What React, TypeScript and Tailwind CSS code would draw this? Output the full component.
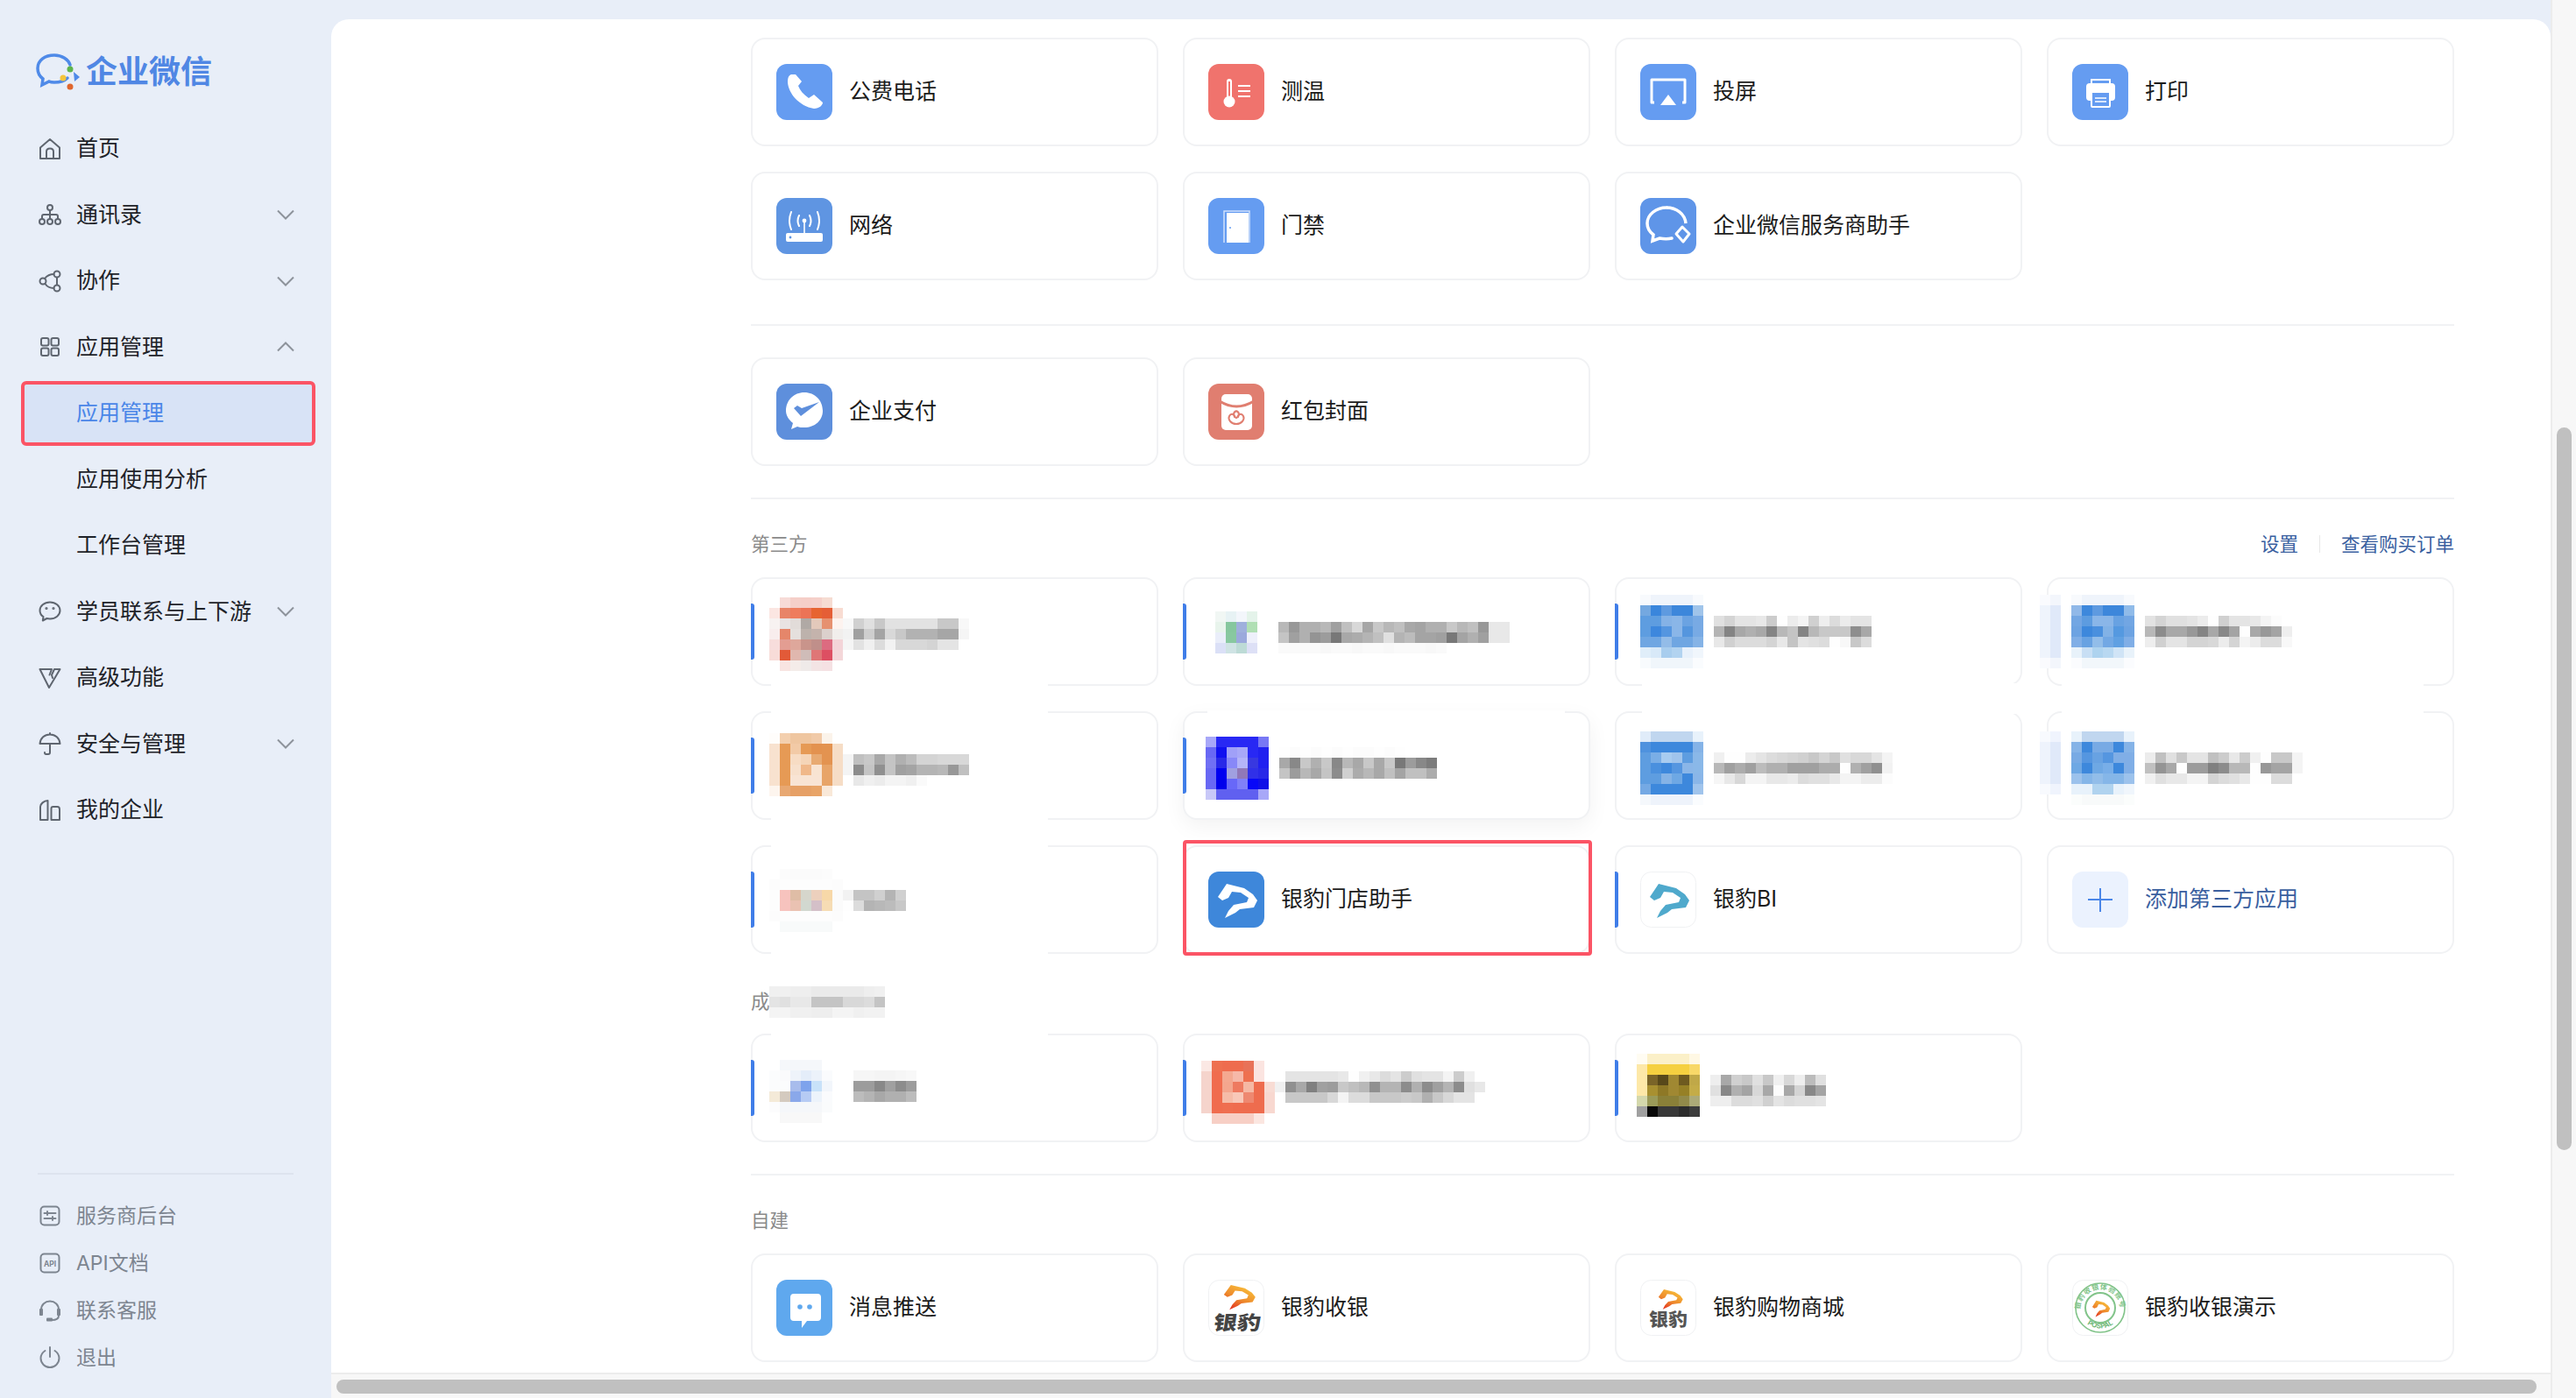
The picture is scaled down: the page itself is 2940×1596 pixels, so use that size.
import type { ReactNode } from 'react'

const CELL = 12
const LEOPARD = 'M11 29 L21 14 L41 19 L51 26 L56 33 L52 41 L36 43 L31 47 L19 53 L23 45 L29 38 L44 35 L46 30 L37 24 L27 23 L23 30 L16 33 Z'

// a privacy-blurred block: each row is a list of hex colours, two digits mean a grey, "-" is empty
function Mosaic({ rows }: { rows: string[] }) {
  const cells = rows.map((r) => r.split(' '))
  const cols = Math.max(...cells.map((r) => r.length))
  return (
    <svg width={cols * CELL} height={rows.length * CELL} shapeRendering="crispEdges">
      {cells.map((row, y) =>
        row.map((c, x) =>
          c === '-' ? null : (
            <rect key={x} x={x * CELL} y={y * CELL} width={CELL} height={CELL} fill={c.length === 2 ? `#${c}${c}${c}` : `#${c}`} />
          ),
        ),
      )}
    </svg>
  )
}

function Tile({ bg, children }: { bg: string; children: ReactNode }) {
  return (
    <svg width="64" height="64" viewBox="0 0 64 64" className="shrink-0">
      <rect x="0" y="0" width="64" height="64" rx="12" fill={bg} />
      {children}
    </svg>
  )
}

function LogoTile({ children }: { children: ReactNode }) {
  return (
    <svg width="64" height="64" viewBox="0 0 64 64" className="shrink-0">
      <rect x="0.5" y="0.5" width="63" height="63" rx="12" fill="#fff" stroke="#f0f1f3" />
      {children}
    </svg>
  )
}

const PhoneIcon = (
  <Tile bg="#659cf1">
    <path d="M17 12 C14 13 13 16 13 21 C14 34 26 48 43 51 C49 51 53 47 53 44 L43 35 L37 39 C31 35 27 30 25 25 L29 20 L22 12 Z" fill="#fff" />
  </Tile>
)
const TempIcon = (
  <Tile bg="#f0736d">
    <rect x="21" y="17" width="6" height="26" rx="3" fill="#fff" />
    <rect x="23" y="20" width="2" height="18" fill="#f0736d" />
    <circle cx="24" cy="43" r="6.5" fill="#fff" />
    <path d="M34 25 H48 M34 31 H48 M34 37 H48" stroke="#fff" strokeWidth="2" />
  </Tile>
)
const CastIcon = (
  <Tile bg="#659cf1">
    <path d="M16 44 H13 V18 H51 V44 H48" fill="none" stroke="#fff" strokeWidth="3" strokeLinejoin="round" />
    <path d="M32 35 L41 47 H23 Z" fill="#fff" />
  </Tile>
)
const PrintIcon = (
  <Tile bg="#659cf1">
    <path d="M22 22 V18 H43 V22" fill="none" stroke="#fff" strokeWidth="2" />
    <rect x="16" y="22" width="33" height="20" rx="4" fill="#fff" />
    <rect x="22" y="32" width="21" height="17" rx="1" fill="#659cf1" stroke="#fff" strokeWidth="2" />
    <path d="M26 39 H39 M26 43 H39" stroke="#fff" strokeWidth="1.6" />
  </Tile>
)
const NetIcon = (
  <Tile bg="#5f95e2">
    <rect x="11" y="40" width="42" height="10" rx="2" fill="#fff" />
    <circle cx="16" cy="45" r="1.4" fill="#5f95e2" />
    <path d="M32 27 V40" stroke="#fff" strokeWidth="1.6" />
    <circle cx="32" cy="26" r="2.4" fill="#fff" />
    <path d="M26 20 Q23 26 26 32 M38 20 Q41 26 38 32 M17 16 Q13 26 17 36 M47 16 Q51 26 47 36" fill="none" stroke="#fff" strokeWidth="2" strokeLinecap="round" />
  </Tile>
)
const DoorIcon = (
  <Tile bg="#659cf1">
    <path d="M18 51 V15 H47 V51" fill="none" stroke="#cfe0fb" strokeWidth="1.5" />
    <rect x="21" y="17" width="25" height="34" fill="#fff" />
    <circle cx="25" cy="34" r="1" fill="#659cf1" />
  </Tile>
)
const WecomIcon = (
  <Tile bg="#5f95e8">
    <path d="M30 11 C18 11 8 19 8 29 C8 34 11 39 15 42 L14 49 L22 46 C27 47 32 47 36 46" fill="none" stroke="#fff" strokeWidth="3.5" strokeLinecap="round" />
    <path d="M52 29 C51 18 41 11 30 11" fill="none" stroke="#fff" strokeWidth="3.5" />
    <path d="M48 33 L56 41 L49 50 L41 41 Z" fill="none" stroke="#fff" strokeWidth="3" strokeLinejoin="round" />
  </Tile>
)
const PayIcon = (
  <Tile bg="#5e8fdc">
    <path d="M32 10 C44 10 53 19 53 31 C53 42 44 50 32 50 C29 50 26 50 24 49 L17 52 L19 45 C14 41 11 36 11 31 C11 19 20 10 32 10 Z" fill="#fff" />
    <path d="M20 28 L28 37 L49 21 L29 28 L24 25 Z" fill="#5e8fdc" />
  </Tile>
)
const RedIcon = (
  <Tile bg="#e07e70">
    <rect x="15" y="12" width="35" height="41" rx="5" fill="#fff" />
    <path d="M13 20 Q32 32 52 20" fill="none" stroke="#e07e70" strokeWidth="3" />
    <path d="M32 46 C26 46 22 41 24 37 C26 33 31 35 30 39 M32 46 C38 46 42 41 40 37 C38 33 33 35 34 39 M32 31 C28 33 28 37 32 39 C36 37 36 33 32 31" fill="none" stroke="#e07e70" strokeWidth="2" />
  </Tile>
)
const MsgIcon = (
  <Tile bg="#5fa8ee">
    <path d="M20 16 H47 Q51 16 51 20 V43 Q51 47 47 47 H35 L29 55 L29 47 H20 Q16 47 16 43 V20 Q16 16 20 16 Z" fill="#fff" />
    <circle cx="27" cy="31" r="2.8" fill="#5fa8ee" />
    <circle cx="38" cy="31" r="2.8" fill="#5fa8ee" />
  </Tile>
)
const LeopardBlue = (
  <Tile bg="#3e87da">
    <path d={LEOPARD} fill="#fff" />
  </Tile>
)
const LeopardTeal = (
  <LogoTile>
    <path d={LEOPARD} fill="#4fa9cc" />
  </LogoTile>
)
const AddIcon = (
  <Tile bg="#ebf2fe">
    <path d="M32 19 V46 M18 32 H46" stroke="#4a86e8" strokeWidth="2" />
  </Tile>
)

function Fire() {
  return (
    <defs>
      <linearGradient id="fire" x1="0.8" y1="0" x2="0.2" y2="1">
        <stop offset="0" stopColor="#f9c63c" />
        <stop offset="0.55" stopColor="#ee8a2c" />
        <stop offset="1" stopColor="#e22d20" />
      </linearGradient>
    </defs>
  )
}

const CashierIcon = (
  <LogoTile>
    <Fire />
    <path d={LEOPARD} fill="url(#fire)" transform="translate(9 -4) scale(0.8 0.72)" />
    <text x="32" y="57" textAnchor="middle" fontSize="22" fontWeight="900" fill="#444" textLength="54" lengthAdjust="spacingAndGlyphs" transform="skewX(-8) translate(8 0)">银豹</text>
  </LogoTile>
)
const ShopIcon = (
  <LogoTile>
    <path d={LEOPARD} fill="url(#fire)" transform="translate(14 3) scale(0.62 0.58)" />
    <text x="32" y="53" textAnchor="middle" fontSize="20" fontWeight="900" fill="#555" textLength="44" lengthAdjust="spacingAndGlyphs">银豹</text>
  </LogoTile>
)
const DemoIcon = (
  <LogoTile>
    <circle cx="32" cy="32" r="28" fill="none" stroke="#82c48a" strokeWidth="1.6" />
    <circle cx="32" cy="32" r="17" fill="none" stroke="#82c48a" strokeWidth="2" />
    <path id="ring-top" d="M9 34 A23 23 0 0 1 55 34" fill="none" />
    <path id="ring-bot" d="M11 44 A25 25 0 0 0 53 44" fill="none" />
    <text fontSize="8" fill="#82c48a" fontWeight="700">
      <textPath href="#ring-top" textLength="70">银豹收银体验账号</textPath>
    </text>
    <text fontSize="8" fill="#6fb878" fontWeight="700">
      <textPath href="#ring-bot" startOffset="9">POSPAL</textPath>
    </text>
    <path d={LEOPARD} fill="url(#fire)" transform="translate(18 17) scale(0.45 0.48)" />
  </LogoTile>
)

type Blur = { left: number; top: number; rows: string[] }
type App = {
  name?: string
  icon?: ReactNode
  bar?: boolean
  blur?: Blur
  link?: boolean
  selected?: boolean
  hover?: boolean
  hideTop?: [number, number]
  hideBottom?: [number, number]
}

function AppCard({ app }: { app: App }) {
  return (
    <div className={`relative flex h-[124px] items-center gap-[19px] rounded-[16px] border-2 border-[#f1f2f4] bg-white pl-[27px] ${app.hover ? 'shadow-[0_8px_24px_rgba(0,0,0,0.05)]' : ''}`}>
      {app.icon}
      {app.name && <span className={`text-[25px] ${app.link ? 'text-[#3a5f9f]' : 'text-[#1c1c1c]'}`}>{app.name}</span>}
      {app.bar && <span className="absolute left-[-2px] top-[28px] h-[64px] w-[4px] rounded-r-[3px] bg-[#3f7de8]" />}
      {app.hideTop && <span className="absolute top-[-3px] h-[4px] bg-white" style={{ left: app.hideTop[0], width: app.hideTop[1] }} />}
      {app.hideBottom && <span className="absolute bottom-[-3px] h-[4px] bg-white" style={{ left: app.hideBottom[0], width: app.hideBottom[1] }} />}
      {app.blur && (
        <div className="absolute flex" style={{ left: app.blur.left - 2, top: app.blur.top - 2 }}>
          <Mosaic rows={app.blur.rows} />
        </div>
      )}
      {app.selected && <span className="absolute -bottom-[4px] -left-[2px] -right-[4px] -top-[8px] rounded-[4px] border-4 border-[#fb5465]" />}
    </div>
  )
}

function Grid({ apps }: { apps: App[] }) {
  return (
    <div className="grid w-[1944px] grid-cols-[repeat(4,465px)] gap-x-[28px] gap-y-[29px]">
      {apps.map((a, i) => (
        <AppCard key={i} app={a} />
      ))}
    </div>
  )
}

const Hr = ({ className }: { className: string }) => <div className={`h-[2px] w-[1944px] bg-[#f1f2f4] ${className}`} />

const thirdParty: App[] = [
  {
    bar: true,
    hideBottom: [21, 316],
    blur: {
      left: 21,
      top: 23,
      rows: [
        '- f7dbd7 f5cfc9 f5cec8 f5d0ca f6dcd2',
        'fbe6e2 e88468 ee7c5d ec7356 e76431 e55e36 f8dcd2',
        'f7f2f1 e9e3e2 e2dcd9 b0a9a5 e3c9bb e69170 fdf3ef f8 d0 e0 c8 e2 e2 e2 e2 e2 c8 c8 f8',
        'f8eded e5866a e5e0dd bdb2ac c4b3ac dbd0cc f1eeec f2 a0 ce a4 d8 c8 b2 b2 b2 a6 a6 f5',
        'f7dddc e39d92 dea79b c9948b c08f8a dc6b80 f3d4d8 f5 e2 f0 dc f2 d8 d8 d8 d4 e4 e4',
        'f8dcd8 e25a38 e0b7ae cfbcb8 df7676 dd4f62 f4d7d9',
        '- f8e4e1 f4ece9 efeae9 f3e4e4 f5e1e3',
      ],
    },
  },
  {
    bar: true,
    blur: {
      left: 37,
      top: 39,
      rows: [
        'f1f7f4 e7f2f4 f3f6fb e4f3ea',
        'e8f4ec 86c79e 9fb0dc b0dfb4 - - b8 98 b0 b0 b8 a0 c0 d8 a6 c8 b8 c0 a8 a4 b0 b0 c8 b8 c0 98 e8 e8',
        'eaeefa 88c8a0 9ba9dc eef0fb - - c4 a0 b0 94 9c 78 a8 ac b4 c0 e0 b4 bc a4 a4 a0 78 a4 b0 a0 e8 e8',
        'dbe0f7 cfe3e4 bddbd6 dde0f6 - - fa fa fa fa f8 fa fa f8 fa fa f8 fa fa fa f8 fa',
      ],
    },
  },
  {
    bar: true,
    hideBottom: [29, 434],
    blur: {
      left: 29,
      top: 20,
      rows: [
        'f8fafd eff4fb eff4fb eff4fb eff4fb f8fafd',
        '74a8e0 3a86dc 5e9ae0 3d87db 3c87db a0c4ea',
        '5e9de0 5e9de0 85b2e6 8ab6e8 6ba3e2 78aae4 - e0 d4 e4 e4 e8 cc fe ec f4 d0 ee dc ec e4 e4',
        '5e9de0 3d87dd 5596e0 8ab6e8 5596de 78aae4 - b4 84 a8 b0 a8 84 b8 c4 84 b8 c8 c8 c8 8e a8',
        '6fa6e2 6fa6e2 93bce8 6fa6e2 6fa6e2 85b3e6 - e8 d0 dc dc dc d4 e8 c4 e4 e0 dc fe f8 c8 dc',
        'e0eef9 d8e9f8 a8cdee b2d3f0 e8f1fb f0f6fc',
        'f8fbfd f0f6fb f0f6fb f0f6fb f0f6fb fafcfe',
      ],
    },
  },
  {
    hideBottom: [15, 413],
    blur: {
      left: -8,
      top: 20,
      rows: [
        'fafbfe f3f6fc - f8fafd eff4fb eff4fb eff4fb eff4fb f8fafd',
        'eff4fc e0e9f9 - 90b8e8 3d88dc 5e9ae0 3d87db 3d87db 90bbe9',
        'eff4fc e0e9f9 - 72a6e3 5d9ce0 8ab6e8 8ab6e8 68a2e2 72a6e3 - e2 d4 e0 e0 e4 ec fe d0 e4 e4 e8 f4 fc',
        'eff4fc e0e9f9 - 6da3e2 3d88dc 4a90de 82b2e6 5599e0 6da3e2 - b8 8c a8 a8 98 84 a8 88 a4 fe a8 98 a4 ee',
        'eff4fc e0e9f9 - 80aee6 68a2e2 92bde9 72a8e4 60a0e2 80aee6 - ee d0 e4 e4 d4 d4 d8 ec d4 f4 ec dc dc f8',
        'eff4fc e0e9f9 - e8f2fa c8dff4 aed3ef b8d8f1 d0e4f6 e8f2fa',
        'fafbfe f3f6fc - fbfcfe f2f7fb f2f7fb f2f7fb f2f7fb fbfcfe',
      ],
    },
  },
  {
    bar: true,
    hideTop: [21, 316],
    hideBottom: [21, 316],
    blur: {
      left: 21,
      top: 25,
      rows: [
        'fffdfb f3cfae efc6a0 efc6a0 f1caa8 fbf3ea',
        'f8e2cf e69a55 f2caa6 e69a55 e3924f e39350 f6ddc6',
        'f8e2cf e69a55 f7dcc4 f5d5b8 e8aa72 e39350 f6ddc6 f4 c0 c8 a8 c4 b0 bc d4 d4 d8 d8 d8',
        'f8e2cf e69a55 f7e0cc f0b88a f8e4d2 e8a468 f6ddc6 f4 8c c4 90 c4 a0 a4 b4 b4 b8 98 c0',
        'f8e2cf e69a55 f8e4d4 f8e4d4 f8e4d4 e8a468 f6ddc6 - e8 f0 ec f4 f4 f0 fa',
        'fdf5ee e8a872 e6a066 e6a066 e8a468 f9e8d8',
      ],
    },
  },
  {
    bar: true,
    hover: true,
    hideTop: [26, 408],
    blur: {
      left: 26,
      top: 29,
      rows: [
        'a8a8f8 2828f4 2828f4 2828f4 2828f4 7878f4',
        '6868f4 1010f0 a0a0f8 a8a8f8 2828f4 2020f0 - fe fc fe fc fe fc fe fc fc fe fc fe',
        '7070f4 2828e8 8888f8 b4b4f8 3838e0 2020f0 - a8 88 c8 b0 c8 88 b8 a8 c8 a8 c8 78 9c 88 7c',
        '6868f4 0000f0 a0a0e0 9078b8 3030e8 2828e8 - c4 9c b8 a8 c4 8c d0 ac b8 a8 c0 a4 c0 c0 ac',
        '6868f4 0000ec 6868f8 8080f8 0808f8 1010e8',
        'c8c8f8 6060f0 6060f0 6060f0 6060f0 a8a8f8',
      ],
    },
  },
  {
    hideTop: [29, 434],
    blur: {
      left: 29,
      top: 23,
      rows: [
        'e0ecf9 c0d6ef c0d6ef c0d6ef c0d6ef e8f2fb',
        '4f92de 3d88dc 3d88dc 3d88dc 3d88dc 85b3e7',
        '5e9de0 7aaee6 a8ccf0 a0c4ec 5e9de0 8ab8e8 - f0 fe fe ec e4 dc d8 d4 d0 c8 d4 c8 e0 d8 d8 e4 f4',
        '5e9de0 4a90de 3d88dc 5596e0 8ab6e8 8ab8e8 - b8 a0 ac a0 bc b0 b0 a0 a0 a0 ac ac fe b0 a0 90 f2',
        '5e9de0 5e9de0 85b3e6 6ea8e4 3d88dc 8ab6e8 - f6 e8 d8 f4 f4 e8 e8 ec dc e0 e0 e8 f4 f4 ec ec fc',
        '75a9e4 3d88dc 3d88dc 3d88dc 3d88dc a0c4ec',
        'f5f8fc eef3fb eef3fb eef3fb eef3fb fafcfe',
      ],
    },
  },
  {
    hideTop: [15, 413],
    blur: {
      left: -8,
      top: 23,
      rows: [
        'f8fafe f0f4fd - e8f2fb c0d6ef c0d6ef c0d6ef c0d6ef e8f2fb',
        'eef3fc e0e9f9 - 85b3e7 3d88dc 78aae4 78aae4 3d88dc 85b3e7',
        'eef3fc e0e9f9 - 78aae4 5596e0 68a2e2 5596e0 80aee6 80aee6 - ec c0 e0 c8 e4 e4 c0 cc e8 cc f0 fe c8 c8 f4',
        'eef3fc e0e9f9 - 6ea8e4 3d88dc 6ea8e4 78aee8 3d88dc 80aee6 - c0 94 a8 fe 9c 9c 80 8c b8 b8 fe 98 a4 a4 f4',
        'eef3fc e0e9f9 - 9cc2ec 85b6e8 92bde9 85b6e8 85b6e8 9cc2ec - f0 e0 e8 e8 f4 f4 d4 dc e0 e8 fe fe dc dc',
        'f8fafe f0f4fd - e8f2fb e8f2fb b0d3ef b0d3ef e8f2fb f0f6fc',
        '- - - fbfdfc f8fafa f8fafa f8fafa f8fafa fbfdfc',
      ],
    },
  },
  {
    bar: true,
    hideTop: [21, 316],
    hideBottom: [21, 316],
    blur: {
      left: 21,
      top: 27,
      rows: [
        '- fcfcfc fbfbfb fbfbfb fbfbfb fcfcfc',
        'fcfcfc fdfdfd fdfdfd fdfdfd fdfdfd fdfdfd fcfcfc',
        'fdfdfd f7c3be dfbda6 d6d6cc ecd0bd f7d8a8 fbfbfb f2 c4 c4 d0 b4 d0',
        'fdfdfd f7c3be eac2b2 d2d8d0 d4c0c8 f6dcb4 fbfbfb fe dc b4 b8 bc c8',
        'fcfcfc fdfdfd fdfdfd fdfdfd fdfdfd fdfdfd fcfcfc',
        '- f8fafa f8fafa f8fafa f8fafa f8fafa',
      ],
    },
  },
  { name: '银豹门店助手', icon: LeopardBlue, selected: true },
  { name: '银豹BI', icon: LeopardTeal, bar: true },
  { name: '添加第三方应用', icon: AddIcon, link: true },
]

const contractors: App[] = [
  {
    bar: true,
    hideTop: [21, 316],
    blur: {
      left: 21,
      top: 30,
      rows: [
        '- f5f7fa f5f7fa f5f7fa f5f7fa',
        'fbfcfd fafafc eef3fa e4edf9 ecf2fa fafbfd - - f6 f6 f4 f4 f6 f8',
        'fbfcfd fbfcfd a8bcec 7ea3ec c8e2f9 f2f6fb - - 9c 9c 88 a0 8c 9c',
        'f4ead8 d4cabf 8aa8ea b6cbf4 ecf3fb fafbfd - - bc b4 a8 b0 b0 bc',
        'fcfcfd f5f7fa f5f7fa f5f7fa f5f7fa fafbfc',
        '- f8f8f8 f8f8f8 f8f8f8 f8f8f8',
      ],
    },
  },
  {
    bar: true,
    blur: {
      left: 21,
      top: 31,
      rows: [
        'fbe8e4 ee7050 ee6c4e ee6c4e e87258 fbe4e0',
        'f5d4cc f06c4e f4a890 f6b8a8 ee7050 fbe4e0 - - e4 e4 e4 e4 e4 e8 fe f0 e8 dc e4 cc e0 e4 e4 f4 cc f0',
        'f5d4cc f06c4e f4a68e ee7a60 f5b8a4 ee6c4e f8dcd4 f0 90 a8 80 a0 9c c8 c0 b8 90 b4 b4 8c b0 8c a0 b4 8c e0 e8',
        'f5d4cc f06c4e f6bca8 f8c8b8 ee8870 ee6c4e f8d8d0 - c8 c8 c8 c8 d8 f4 dc dc c8 c8 c8 cc c8 b0 c8 d8 e4 e4',
        'f5d4cc f06c4e ef6e50 ef6c4e ee6c4e ee6c4e f8d8d0',
        '- f7cfc5 f7cfc5 f7cfc5 f7cfc5 fbe6e0',
      ],
    },
  },
  {
    bar: true,
    blur: {
      left: 25,
      top: 23,
      rows: [
        'fffcf2 fbf0c8 fbf0c8 fbf0c8 fbf0c8 fff8e4',
        'fde8a8 f5d040 f5d040 f5d040 f5d040 f8d868',
        'fde8a8 7a6428 58481a a08832 6e5a20 c0a848 - ee a8 d0 c8 e0 c8 f0 d8 ee bc e0',
        'fde8a8 a89030 8e7826 a08832 968026 c4ac48 - e0 88 b0 a4 d8 a8 fc a8 d4 88 a4',
        'd4d8ac 9a9a58 8a8038 8a8038 928a4a acaa78 - ee ee dc dc e0 d0 e4 dc e0 e0 e4',
        'a0a0a0 080808 383838 383838 2c2c2c 3c3c3c',
      ],
    },
  },
]

const SW = { fill: 'none', stroke: '#5f6670', strokeWidth: 2, strokeLinecap: 'round', strokeLinejoin: 'round' } as const
const SG = { ...SW, stroke: '#7d8590' }

function NavIcon({ children }: { children: ReactNode }) {
  return (
    <svg width="26" height="26" viewBox="0 0 26 26" className="shrink-0">
      {children}
    </svg>
  )
}

const Icons = {
  home: <path {...SW} d="M2 11.5 L13 2 L24 11.5 V24 H2 Z M9 24 V16 Q9 12.5 13 12.5 Q17 12.5 17 16 V24" />,
  org: (
    <g {...SW}>
      <circle cx="13" cy="5" r="3" />
      <circle cx="4" cy="21" r="3" />
      <circle cx="13" cy="21" r="3" />
      <circle cx="22" cy="21" r="3" />
      <path d="M4 18 V15 Q4 13 6 13 H20 Q22 13 22 15 V18 M13 8 V18" />
    </g>
  ),
  collab: (
    <g {...SW}>
      <circle cx="5" cy="13" r="3.5" />
      <circle cx="21" cy="5" r="3.5" />
      <circle cx="21" cy="21" r="3.5" />
      <path d="M7 10 Q11 5 17.5 5 M7.5 16 Q11 21 17.5 21 M21 9 V17" />
    </g>
  ),
  grid: (
    <g {...SW}>
      <rect x="3" y="3" width="8.5" height="8.5" rx="2" />
      <rect x="14.5" y="3" width="8.5" height="8.5" rx="2" />
      <rect x="3" y="14.5" width="8.5" height="8.5" rx="2" />
      <rect x="14.5" y="14.5" width="8.5" height="8.5" rx="2" />
    </g>
  ),
  chat: (
    <g {...SW}>
      <path d="M13 2.5 C6.5 2.5 1.5 6.7 1.5 12 C1.5 15 3 17.5 5.5 19.2 L4.8 23.5 L9.5 21 C10.6 21.3 11.8 21.4 13 21.4 C19.5 21.4 24.5 17.2 24.5 12 C24.5 6.7 19.5 2.5 13 2.5 Z" />
      <circle cx="9" cy="9.5" r="0.6" fill="#5f6670" />
      <circle cx="17" cy="9.5" r="0.6" fill="#5f6670" />
    </g>
  ),
  vip: <path {...SW} d="M1.5 3 H15 L12.5 9.5 M1.5 3 L12 24 L24.5 3 H18 L15 9.5 L16 13" />,
  umbrella: <path {...SW} d="M1.5 13 C2 6.5 7 2.5 13 2.5 C19 2.5 24 6.5 24.5 13 Z M13 1 V2.5 M13 13 V23 Q13 25 11 25 H8.5 Q7 25 7 23" />,
  corp: <path {...SW} d="M2 24 V9 C2 6 6 2 10.5 2 V24 Z M14.5 24 V11 Q14.5 9 16.5 9 H21.5 Q24 9 24 12 V24 Z" />,
  svc: (
    <g {...SG}>
      <rect x="2.5" y="2.5" width="21" height="21" rx="4" />
      <path d="M6.5 10 H19.5 M6.5 16 H19.5 M10 8 V12 M16 14 V18" />
    </g>
  ),
  api: (
    <g>
      <rect x="2.5" y="2.5" width="21" height="21" rx="4" {...SG} />
      <text x="13" y="17" textAnchor="middle" fontSize="8.5" fontWeight="700" fill="#7d8590">API</text>
    </g>
  ),
  headset: (
    <g {...SG}>
      <path d="M3 14 V12 C3 6.5 7.5 2.5 13 2.5 C18.5 2.5 23 6.5 23 12 V14 M23 19 C23 22 20 24 15 24" />
      <rect x="2" y="12" width="2" height="6" fill="#7d8590" />
      <rect x="22" y="12" width="2" height="6" fill="#7d8590" />
      <rect x="10" y="22.5" width="5" height="2" fill="#7d8590" />
    </g>
  ),
  power: <path {...SG} d="M7.5 5 C4.5 7 2.5 10 2.5 13.5 C2.5 19.3 7.2 24 13 24 C18.8 24 23.5 19.3 23.5 13.5 C23.5 10 21.5 7 18.5 5 M13 1 V12" />,
}

const nav: { label: string; icon?: ReactNode; chevron?: 'up' | 'down'; sub?: boolean; active?: boolean }[] = [
  { label: '首页', icon: Icons.home },
  { label: '通讯录', icon: Icons.org, chevron: 'down' },
  { label: '协作', icon: Icons.collab, chevron: 'down' },
  { label: '应用管理', icon: Icons.grid, chevron: 'up' },
  { label: '应用管理', sub: true, active: true },
  { label: '应用使用分析', sub: true },
  { label: '工作台管理', sub: true },
  { label: '学员联系与上下游', icon: Icons.chat, chevron: 'down' },
  { label: '高级功能', icon: Icons.vip },
  { label: '安全与管理', icon: Icons.umbrella, chevron: 'down' },
  { label: '我的企业', icon: Icons.corp },
]

const footerNav = [
  { label: '服务商后台', icon: Icons.svc },
  { label: 'API文档', icon: Icons.api },
  { label: '联系客服', icon: Icons.headset },
  { label: '退出', icon: Icons.power },
]

function Chevron({ dir }: { dir: 'up' | 'down' }) {
  return (
    <svg width="20" height="12" viewBox="0 0 20 12" className="absolute left-[316px]">
      <path d={dir === 'down' ? 'M1 1.5 L10 10.5 L19 1.5' : 'M1 10.5 L10 1.5 L19 10.5'} fill="none" stroke="#8d939b" strokeWidth="2" />
    </svg>
  )
}

function Sidebar() {
  return (
    <aside className="flex w-[378px] shrink-0 flex-col">
      <div className="flex h-[132px] items-start gap-[6px] pl-[41px] pt-[60px]">
        <svg width="51" height="44" viewBox="0 0 51 44" className="shrink-0">
          <path d="M36 29 C32 33 27 34 21 34 C19 34 17 34 15 33 L7 37 L8 30 C4 27 2 23 2 18 C2 9 10 3 21 3 C30 3 37 8 39 14" fill="none" stroke="#4f8ae8" strokeWidth="3.5" strokeLinecap="round" />
          <circle cx="39" cy="19" r="3.5" fill="#5db44c" />
          <circle cx="31" cy="29" r="3.5" fill="#f4c53c" />
          <circle cx="39" cy="39" r="3.5" fill="#e0672e" />
          <path d="M43 22 L50 28 L44 33" fill="#4f8ae8" />
        </svg>
        <span className="mt-[-2px] text-[36px] font-bold leading-[48px] text-[#5087e4]">企业微信</span>
      </div>
      <nav className="flex flex-col">
        {nav.map((item, i) => (
          <div key={i} className="relative flex h-[75.5px] items-center">
            {item.active && <span className="absolute bottom-[1px] left-[24px] right-[18px] top-[1px] rounded-[6px] border-4 border-[#fb5465] bg-[#d8e3f6]" />}
            {item.icon ? <span className="ml-[44px] flex w-[43px]"><NavIcon>{item.icon}</NavIcon></span> : <span className="w-[87px]" />}
            <span className={`relative text-[25px] ${item.active ? 'text-[#4a86e8]' : 'text-[#1f2329]'}`}>{item.label}</span>
            {item.chevron && <Chevron dir={item.chevron} />}
          </div>
        ))}
      </nav>
      <div className="mt-auto flex flex-col pb-[19px]">
        <div className="mx-[43px] mb-[20px] h-[2px] bg-[#dde3ee]" />
        {footerNav.map((item) => (
          <div key={item.label} className="flex h-[54px] items-center pl-[44px]">
            <span className="flex w-[43px]"><NavIcon>{item.icon}</NavIcon></span>
            <span className="text-[23px] text-[#7d8590]">{item.label}</span>
          </div>
        ))}
      </div>
    </aside>
  )
}

export default function App() {
  return (
    <div className="flex h-[1596px] w-[2940px] overflow-hidden bg-[#e8eef8] font-['Inter','Noto_Sans_CJK_SC',sans-serif]">
      <Sidebar />
      <div className="flex min-w-0 flex-1 flex-col pt-[22px]">
        <main className="h-[1545px] overflow-hidden rounded-t-[20px] bg-white pl-[479px] pt-[21px]">
          <Grid
            apps={[
              { name: '公费电话', icon: PhoneIcon },
              { name: '测温', icon: TempIcon },
              { name: '投屏', icon: CastIcon },
              { name: '打印', icon: PrintIcon },
              { name: '网络', icon: NetIcon },
              { name: '门禁', icon: DoorIcon },
              { name: '企业微信服务商助手', icon: WecomIcon },
            ]}
          />
          <Hr className="mt-[50px]" />
          <div className="mt-[36px]">
            <Grid
              apps={[
                { name: '企业支付', icon: PayIcon },
                { name: '红包封面', icon: RedIcon },
              ]}
            />
          </div>
          <Hr className="mt-[36px]" />
          <div className="mb-[20px] mt-[33px] flex h-[36px] w-[1944px] items-center justify-between text-[21.5px]">
            <span className="text-[#8a8a8a]">第三方</span>
            <div className="flex items-center text-[#3a5f9f]">
              <span>设置</span>
              <span className="mx-[24px] h-[20px] w-[1px] bg-[#e8e8e8]" />
              <span>查看购买订单</span>
            </div>
          </div>
          <Grid apps={thirdParty} />
          <div className="relative mb-[19px] mt-[36px] flex h-[36px] items-center text-[21.5px] text-[#8a8a8a]">
            <span>成</span>
            <div className="absolute left-[21px] top-[1px] flex">
              <Mosaic
                rows={[
                  'f0 f0 ee ee ea ea ea ea ea ee f0',
                  'e4 e0 e8 e8 c4 c4 c4 d8 d8 dc c4',
                  'f4 f4 f0 f0 ee ee f4 f4 f0 f2 f2',
                ]}
              />
            </div>
          </div>
          <Grid apps={contractors} />
          <Hr className="mt-[36px]" />
          <div className="mb-[20px] mt-[33px] flex h-[36px] items-center text-[21.5px] text-[#8a8a8a]">自建</div>
          <Grid
            apps={[
              { name: '消息推送', icon: MsgIcon },
              { name: '银豹收银', icon: CashierIcon },
              { name: '银豹购物商城', icon: ShopIcon },
              { name: '银豹收银演示', icon: DemoIcon },
            ]}
          />
        </main>
        <div className="flex h-[29px] items-center border-t-2 border-[#ececec] bg-[#f7f7f7] pl-[6px] pr-[16px]">
          <div className="h-[16px] w-full rounded-full bg-[#c0c0c0]" />
        </div>
      </div>
      <div className="w-[29px] shrink-0 border-l-2 border-[#ececec] bg-[#f7f7f7] pl-[5px] pt-[488px]">
        <div className="h-[825px] w-[17px] rounded-full bg-[#c0c0c0]" />
      </div>
    </div>
  )
}
